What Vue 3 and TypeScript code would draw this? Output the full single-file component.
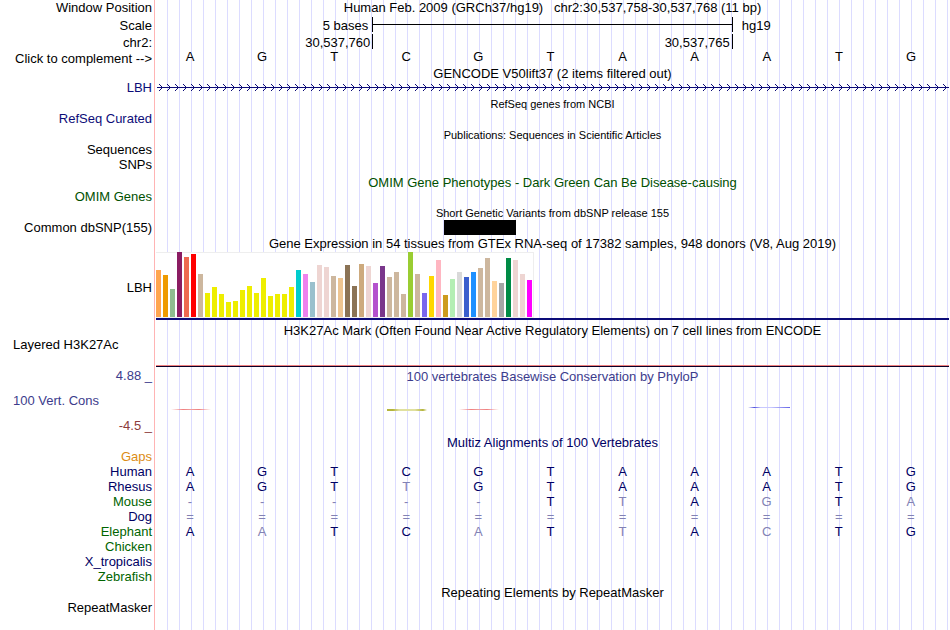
<script setup lang="ts">
import { computed, ref } from 'vue'

const sequence = 'AGTCGTAAATG'
const pairs: Record<string, string> = { A: 'T', T: 'A', G: 'C', C: 'G' }
const complemented = ref(false)
const bases = computed(() =>
  sequence.split('').map((b) => (complemented.value ? pairs[b] : b)),
)

interface Tissue {
  height: number
  color: string
}

const yellow = '#eeee00'
const tan = '#cdb79e'
const blush = '#eed5d2'
const heights = [
  47, 42, 28, 65, 60, 63, 43, 24, 30, 23, 15, 16, 27, 31, 24, 39, 21, 23, 23, 30, 47, 43, 35, 52,
  50, 41, 39, 52, 31, 53, 51, 34, 51, 40, 45, 23, 65, 43, 24, 41, 57, 22, 38, 45, 40, 45, 49, 59,
  36, 34, 59, 57, 43, 37,
]
const colors = [
  '#ffa54f', '#ee9a00', '#8fbc8f', '#8b1c62', '#ee6a50', '#ff0000', tan,
  ...Array<string>(13).fill(yellow),
  '#00cdcd', '#ee82ee', '#9ac0cd', blush, blush, tan, '#eec591', '#8b7355', '#8b7355', '#cdaa7d',
  blush, '#b452cd', '#7a378b', tan, tan, tan, '#9acd32', tan, '#7a67ee', '#ffd700', '#ffb6c1',
  '#cd9b1d', '#b4eeb4', '#d9d9d9', '#3a5fcd', '#1e90ff', tan, tan, '#ffd39b', '#a6a6a6',
  '#008b45', blush, blush, '#ff00ff',
]
const tissues: Tissue[] = heights.map((height, i) => ({ height, color: colors[i] }))

// Kind of conservation mark per base position; blank positions score near zero.
const conservation = ['red', '', '', 'olive', 'red', '', '', '', 'blue', '', '']

interface Species {
  name: string
  tone: string
  bases: string
}

// Lower case marks a base that differs from the human one.
const species: Species[] = [
  { name: 'Human', tone: 'navy', bases: 'AGTCGTAAATG' },
  { name: 'Rhesus', tone: 'navy', bases: 'AGTtGTAAATG' },
  { name: 'Mouse', tone: 'green', bases: '-----TtAgTa' },
  { name: 'Dog', tone: 'navy', bases: '===========' },
  { name: 'Elephant', tone: 'green', bases: 'AaTCaTtAcTG' },
  { name: 'Chicken', tone: 'green', bases: '' },
  { name: 'X_tropicalis', tone: 'navy', bases: '' },
  { name: 'Zebrafish', tone: 'green', bases: '' },
]
const cells = (s: Species) => s.bases.padEnd(11, ' ').split('')
const faded = (b: string) => !/[A-Z]/.test(b)
</script>

<template>
  <main class="browser">
    <div class="row tall">
      <div class="label heading">Window Position</div>
      <h1 class="title">Human Feb. 2009 (GRCh37/hg19)&nbsp;&nbsp; chr2:30,537,758-30,537,768 (11 bp)</h1>
    </div>
    <div class="row ruler">
      <div class="label lowered">Scale</div>
      <div class="thirds">
        <span class="before lowered">5 bases</span>
        <span class="bar"></span>
        <span class="after lowered">hg19</span>
      </div>
    </div>
    <div class="row ruler">
      <div class="label lowered">chr2:</div>
      <div class="thirds">
        <span class="before tight lowered">30,537,760</span>
        <span class="ticks tight">30,537,765</span>
      </div>
    </div>
    <div class="row tall">
      <button class="label heading complement" type="button" @click="complemented = !complemented">
        Click to complement --&gt;
      </button>
      <div class="bases">
        <span v-for="(b, i) in bases" :key="i">{{ b }}</span>
      </div>
    </div>

    <div class="row"><h2 class="title">GENCODE V50lift37 (2 items filtered out)</h2></div>
    <div class="row">
      <div class="label gene">LBH</div>
      <div class="track">
        <svg class="intron" aria-hidden="true">
          <defs>
            <pattern id="strand" x="2" width="8" height="15" patternUnits="userSpaceOnUse">
              <path
                d="M1 3h1v1h-1zM2 4h1v1h-1zM3 5h1v1h-1zM4 6h1v1h-1zM3 7h1v1h-1zM2 8h1v1h-1zM1 9h1v1h-1z"
                fill="#0c0c78"
              />
            </pattern>
          </defs>
          <rect x="2" width="100%" height="15" fill="url(#strand)" />
          <rect x="1" y="6" width="100%" height="1" fill="#0c0c78" />
        </svg>
      </div>
    </div>
    <div class="row tall"><h2 class="title small">RefSeq genes from NCBI</h2></div>
    <div class="row"><div class="label gene">RefSeq Curated</div></div>
    <div class="row tall"><h2 class="title small">Publications: Sequences in Scientific Articles</h2></div>
    <div class="row"><div class="label">Sequences</div></div>
    <div class="row spaced"><div class="label">SNPs</div></div>
    <div class="row"><h2 class="title omim">OMIM Gene Phenotypes - Dark Green Can Be Disease-causing</h2></div>
    <div class="row"><div class="label omim">OMIM Genes</div></div>
    <div class="row"><h2 class="title small">Short Genetic Variants from dbSNP release 155</h2></div>
    <div class="row">
      <div class="label heading">Common dbSNP(155)</div>
      <div class="positions"><span class="variant"></span></div>
    </div>

    <div class="row ruler">
      <h2 class="title lowered">Gene Expression in 54 tissues from GTEx RNA-seq of 17382 samples, 948 donors (V8, Aug 2019)</h2>
    </div>
    <div class="row expression">
      <div class="label lowered">LBH</div>
      <div class="track gtex">
        <div class="chart">
          <span
            v-for="(t, i) in tissues"
            :key="i"
            class="tissue"
            :style="{ height: t.height + 'px', background: t.color }"
          ></span>
        </div>
      </div>
    </div>

    <div class="row histone-title">
      <h2 class="title">H3K27Ac Mark (Often Found Near Active Regulatory Elements) on 7 cell lines from ENCODE</h2>
    </div>
    <div class="row histone">
      <div class="label start">Layered H3K27Ac</div>
      <div class="track baseline"></div>
    </div>

    <div class="row phylop">
      <div class="limits">
        <div class="label conserved">4.88 _</div>
        <div class="label start conserved">100 Vert. Cons</div>
        <div class="label lower">-4.5 _</div>
      </div>
      <div>
        <h2 class="title conserved">100 vertebrates Basewise Conservation by PhyloP</h2>
        <div class="positions marks">
          <span v-for="(c, i) in conservation" :key="i" class="mark" :class="c"></span>
        </div>
      </div>
    </div>

    <div class="row"><h2 class="title navy">Multiz Alignments of 100 Vertebrates</h2></div>
    <div class="row"><div class="label gaps">Gaps</div></div>
    <div class="alignment">
      <table>
        <colgroup>
          <col class="names" />
          <col v-for="n in 11" :key="n" />
        </colgroup>
        <tbody>
          <tr v-for="s in species" :key="s.name">
            <th scope="row" :class="s.tone">{{ s.name }}</th>
            <td v-for="(b, i) in cells(s)" :key="i" :class="{ faded: faded(b) }">{{ b.toUpperCase() }}</td>
          </tr>
        </tbody>
      </table>
    </div>
    <div class="row tall"><h2 class="title">Repeating Elements by RepeatMasker</h2></div>
    <div class="row"><div class="label">RepeatMasker</div></div>
  </main>
</template>

<style>
body {
  margin: 0;
  background: #fff;
}
</style>

<style scoped>
.browser {
  box-sizing: border-box;
  min-height: 100vh;
  color: #000;
  font: 13px/15px 'Liberation Sans', Arial, Helvetica, sans-serif;
  background:
    linear-gradient(#ffb4b4, #ffb4b4) 154px 0 / 1px 100% no-repeat,
    repeating-linear-gradient(90deg, #dcdcff 0 1px, transparent 1px 12px) 167px 0 no-repeat;
}
.row {
  display: grid;
  grid-template-columns: 154px minmax(0, 1fr);
  min-height: 15px;
}
.tall {
  min-height: 16px;
}
.ruler {
  min-height: 17px;
}
.spaced {
  min-height: 17px;
}
.label {
  padding-right: 2px;
  line-height: 13px;
  text-align: right;
  white-space: nowrap;
}
.label.heading {
  line-height: 15px;
}
.label.start {
  padding-left: 13px;
  text-align: left;
}
.lowered,
.label.lowered {
  padding-top: 2px;
  line-height: 15px;
}
.complement {
  padding: 0 2px 0 0;
  border: 0;
  background: none;
  color: inherit;
  font: inherit;
  cursor: pointer;
}
.title {
  grid-column: 2;
  margin: 0;
  padding: 0 1px 0 2px;
  font-size: 13px;
  font-weight: normal;
  text-align: center;
  white-space: nowrap;
}
.title.small {
  font-size: 11px;
  line-height: 16px;
  max-height: 15px;
}
.title.lowered {
  padding-top: 1px;
}
.gene {
  color: #0c0c78;
}
.omim {
  color: #005000;
}
.conserved {
  color: #3c3c8c;
}
.lower {
  color: #8c3c3c;
}
.navy {
  color: #000064;
}
.green {
  color: #006400;
}
.gaps {
  color: #dc8c14;
}
.thirds {
  display: grid;
  grid-template-columns: 3fr 5fr 3fr;
  padding: 0 1px 0 2px;
}
.before {
  padding-right: 4px;
  text-align: right;
}
.after {
  padding-left: 9px;
}
.tight {
  padding-right: 2px;
}
.bar,
.ticks {
  height: 15px;
  margin-top: 1px;
  border: solid #000;
  border-width: 0 1px;
}
.bar {
  background: linear-gradient(#000, #000) 0 7px / 100% 1px no-repeat;
}
.ticks {
  line-height: 17px;
  text-align: right;
}
.bases {
  display: grid;
  grid-template-columns: repeat(11, 1fr);
  padding-right: 3px;
  line-height: 13px;
  text-align: center;
}
.track {
  padding: 0 1px 0 2px;
}
.intron {
  display: block;
  width: 100%;
  height: 15px;
}
.positions {
  display: grid;
  grid-template-columns: repeat(11, 1fr);
  padding: 0 1px 0 2px;
}
.variant {
  grid-column: 5;
  height: 15px;
  background: #000;
}
.expression {
  align-items: center;
}
.gtex {
  background: linear-gradient(#0c0c78, #0c0c78) 0 100% / 100% 2px no-repeat content-box;
}
.chart {
  display: flex;
  align-items: flex-end;
  gap: 2px;
  box-sizing: border-box;
  width: 378px;
  height: 66px;
  margin-bottom: 2px;
  border: solid #eee;
  border-width: 0 1px 1px 0;
  background: linear-gradient(#eee, #eee) 0 0 / 100% 1px no-repeat #fff;
}
.tissue {
  flex: none;
  width: 5px;
}
.histone-title {
  padding-top: 3px;
}
.histone {
  min-height: 29px;
}
.baseline {
  background:
    linear-gradient(#f08080, #f08080) 0 27px / 100% 1px no-repeat content-box,
    linear-gradient(#0a0028, #0a0028) 0 28px / 100% 1px no-repeat content-box;
}
.phylop {
  padding-top: 2px;
  min-height: 66px;
}
.limits {
  display: flex;
  flex-direction: column;
  gap: 12px;
}
.marks {
  padding-top: 25px;
}
.mark {
  width: 40px;
  height: 1px;
  margin-left: 15px;
}
.mark.red {
  background: linear-gradient(90deg, transparent, #f08080 30%, #f0a0a0 50%, #f08080 70%, transparent);
}
.mark.olive {
  height: 2px;
  background: linear-gradient(90deg, #b4b43c, #b4b43c 15%, #e0e0a0 30%, #e0e0a0 70%, #b4b43c 90%, transparent);
}
.mark.blue {
  width: 42px;
  margin-top: -2px;
  background: linear-gradient(90deg, transparent, #5050dc 15%, #c8c8ff 30%, #c8c8ff 55%, #6464e6);
}
.alignment {
  padding-right: 3px;
}
table {
  width: 100%;
  table-layout: fixed;
  border-collapse: collapse;
}
.names {
  width: 154px;
}
th,
td {
  height: 15px;
  padding: 0;
  line-height: 13px;
  text-align: center;
  vertical-align: top;
  font-weight: normal;
}
th {
  padding-right: 2px;
  text-align: right;
}
td {
  color: #000064;
}
td.faded {
  color: #8282b4;
}
</style>
